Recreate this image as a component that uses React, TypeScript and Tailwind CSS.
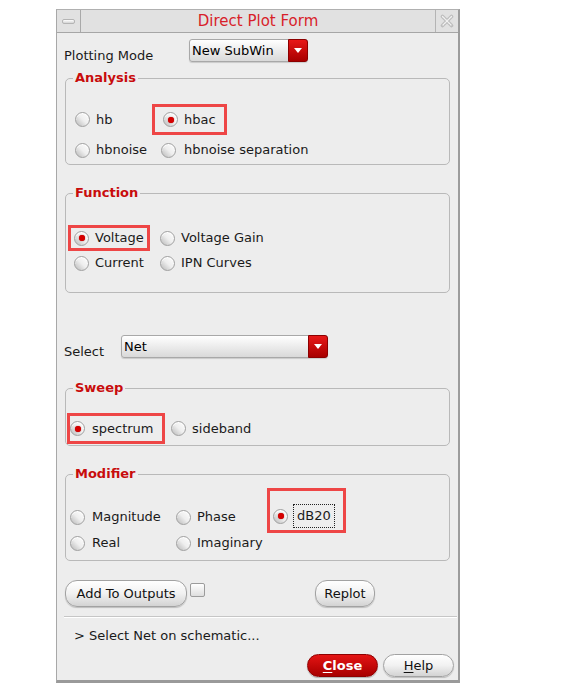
import type { ReactNode } from 'react';

function Radio({ checked }: { checked?: boolean }) {
  return (
    <span className="relative inline-flex h-[15px] w-[15px] shrink-0 items-center justify-center rounded-full border border-[#a0a0a0] bg-linear-to-bl from-white via-[#eeeeee] to-[#b8b8b8] shadow-[inset_0_1px_0_#ffffff]">
      {checked && <span className="h-[6px] w-[6px] rounded-full bg-[#d60000] shadow-[0_0_1px_#900]" />}
    </span>
  );
}

function Option({ label, checked, className = '' }: { label: ReactNode; checked?: boolean; className?: string }) {
  return (
    <div className={`flex h-[20px] shrink-0 items-center gap-[6px] ${className}`}>
      <Radio checked={checked} />
      <span className="whitespace-nowrap">{label}</span>
    </div>
  );
}

function Group({ title, className, children }: { title: string; className: string; children: ReactNode }) {
  return (
    <div className={`relative ml-[8px] w-[385px] shrink-0 rounded-[5px] border border-[#b9b9b9] ${className}`}>
      <span className="absolute -top-[10px] left-[7px] bg-[#ededed] px-[2px] text-[13px] leading-[18px] font-bold text-[#c80c0c]">
        {title}
      </span>
      {children}
    </div>
  );
}

function Dropdown({ value, className }: { value: string; className: string }) {
  return (
    <div className={`flex h-[23px] shrink-0 rounded-[3px] border border-[#a8a8a8] bg-linear-to-b from-white to-[#d9d9d9] shadow-[0_1px_1px_rgba(0,0,0,0.15)] ${className}`}>
      <span className="flex-1 pl-[2px] text-[13px] leading-[22px] text-black">{value}</span>
      <span className="-my-px -mr-px flex w-[20px] items-center justify-center rounded-r-[3px] border border-[#8c0000] bg-linear-to-b from-[#e81818] to-[#a80000]">
        <svg width="8" height="5" viewBox="0 0 8 5">
          <polygon points="0,0 8,0 4,5" fill="#ffffff" />
        </svg>
      </span>
    </div>
  );
}

function Button({ children, className = '' }: { children: ReactNode; className?: string }) {
  return (
    <div className={`flex shrink-0 items-center justify-center rounded-[12px] border border-[#a2a2a2] bg-linear-to-b from-white via-[#f1f1f1] to-[#d3d3d3] text-[13px] text-[#111] shadow-[0_1px_1px_rgba(0,0,0,0.2)] ${className}`}>
      {children}
    </div>
  );
}

export default function App() {
  return (
    <div className="min-h-screen bg-white pt-[9px] pl-[56px] font-['DejaVu_Sans',sans-serif] text-[13px] text-[#1a1a1a]">
      <div className="flex h-[674px] w-[404px] flex-col border-t border-l border-r-2 border-b-[3px] border-t-[#b0b0b0] border-l-[#a8a8a8] border-r-[#9c9c9c] border-b-[#9a9a9a] bg-[#ededed]">
        {/* title bar */}
        <div className="flex h-[23px] shrink-0 border-b border-[#a6a6a6] bg-[#e1e1e1]">
          <div className="flex w-[24px] items-center justify-center border-r border-[#a9a9a9]">
            <span className="h-[5px] w-[13px] rounded-[2px] border border-[#b4b4b4] bg-linear-to-b from-white to-[#d4d4d4]" />
          </div>
          <div className="flex-1 text-center text-[15px] leading-[22px] text-[#d81e2a]">Direct Plot Form</div>
          <div className="flex w-[23px] items-center justify-center border-l border-[#b4b4b4]">
            <svg width="14" height="14" viewBox="0 0 14 14">
              <path d="M2.5 2.5 L11.5 11.5 M11.5 2.5 L2.5 11.5" stroke="#bdbdbd" strokeWidth="3.6" strokeLinecap="round" />
              <path d="M2.5 2.5 L11.5 11.5 M11.5 2.5 L2.5 11.5" stroke="#f2f2f2" strokeWidth="1.3" strokeLinecap="round" strokeDasharray="1 1.2" />
            </svg>
          </div>
        </div>

        {/* plotting mode */}
        <div className="mt-[6px] flex h-[23px] shrink-0 pl-[7px]">
          <span className="mt-[9px] w-[125px] leading-[16px]">Plotting Mode</span>
          <Dropdown value="New SubWin" className="w-[119px]" />
        </div>

        <Group title="Analysis" className="mt-[16px] h-[87px]">
          <div className="mt-[25px] flex items-center">
            <Option label="hb" className="ml-[9px] w-[77px]" />
            <div className="flex h-[31px] items-center border-[3px] border-[#ee4646] pr-[8px] pl-[8px]">
              <Option label="hbac" checked />
            </div>
          </div>
          <div className="mt-[5px] flex">
            <Option label="hbnoise" className="ml-[9px] w-[86px]" />
            <Option label="hbnoise separation" className="gap-[8px]" />
          </div>
        </Group>

        <Group title="Function" className="mt-[28px] h-[100px]">
          <div className="mt-[31px] flex items-center">
            <div className="ml-[2px] flex h-[26px] w-[82px] items-center border-[3px] border-[#ee4646] pl-[3px]">
              <Option label="Voltage" checked />
            </div>
            <Option label="Voltage Gain" className="ml-[10px]" />
          </div>
          <div className="mt-[2px] flex">
            <Option label="Current" className="ml-[8px] w-[86px]" />
            <Option label="IPN Curves" />
          </div>
        </Group>

        {/* select */}
        <div className="mt-[42px] flex h-[22px] shrink-0 pl-[7px]">
          <span className="mt-[9px] w-[57px] leading-[16px]">Select</span>
          <Dropdown value="Net" className="h-[22px] w-[207px]" />
        </div>

        <Group title="Sweep" className="mt-[31px] h-[58px]">
          <div className="mt-[24px] flex items-center">
            <div className="ml-[1px] flex h-[31px] w-[98px] items-center border-[3px] border-[#ee4646] pl-[0px]">
              <Option label="spectrum" checked className="gap-[7px]" />
            </div>
            <Option label="sideband" className="ml-[6px] gap-[4px]" />
          </div>
        </Group>

        <Group title="Modifier" className="mt-[28px] h-[87px]">
          <div className="mt-[13px] flex items-start">
            <Option label="Magnitude" className="mt-[19px] ml-[4px] w-[106px] gap-[7px]" />
            <Option label="Phase" className="mt-[19px] w-[91px]" />
            <div className="flex h-[45px] w-[79px] items-start border-[3px] border-[#ee4646] pt-[13px] pl-[3px]">
              <div className="flex h-[24px] items-center gap-[5px]">
                <Radio checked />
                <span className="flex h-[24px] items-center border border-dotted border-[#222] px-[3px]">dB20</span>
              </div>
            </div>
          </div>
          <div className="flex">
            <Option label="Real" className="ml-[4px] w-[106px] gap-[7px]" />
            <Option label="Imaginary" />
          </div>
        </Group>

        {/* buttons */}
        <div className="mt-[19px] flex h-[27px] shrink-0 items-start pl-[8px]">
          <Button className="h-[27px] w-[122px]">Add To Outputs</Button>
          <span className="mt-[3px] ml-[3px] h-[14px] w-[15px] rounded-[2px] border border-[#9c9c9c] bg-linear-to-b from-white to-[#dedede]" />
          <Button className="ml-[110px] h-[27px] w-[60px]">Replot</Button>
        </div>

        <div className="mt-[9px] mr-[1px] ml-[7px] h-[2px] shrink-0 border-t border-b border-t-[#c6c6c6] border-b-white" />

        <div className="mt-[9px] h-[18px] shrink-0 pl-[17px] leading-[18px]">&gt; Select Net on schematic...</div>

        <div className="mt-[9px] flex shrink-0 justify-end gap-[5px] pr-[4px]">
          <div className="flex h-[23px] w-[71px] items-center justify-center rounded-[12px] border border-[#8e0000] bg-linear-to-b from-[#e41414] to-[#a80000] text-[13px] font-bold text-white shadow-[0_1px_1px_rgba(0,0,0,0.25)]">
            <span><span className="underline underline-offset-2">C</span>lose</span>
          </div>
          <Button className="h-[23px] w-[71px]">
            <span><span className="underline underline-offset-2">H</span>elp</span>
          </Button>
        </div>
      </div>
    </div>
  );
}
